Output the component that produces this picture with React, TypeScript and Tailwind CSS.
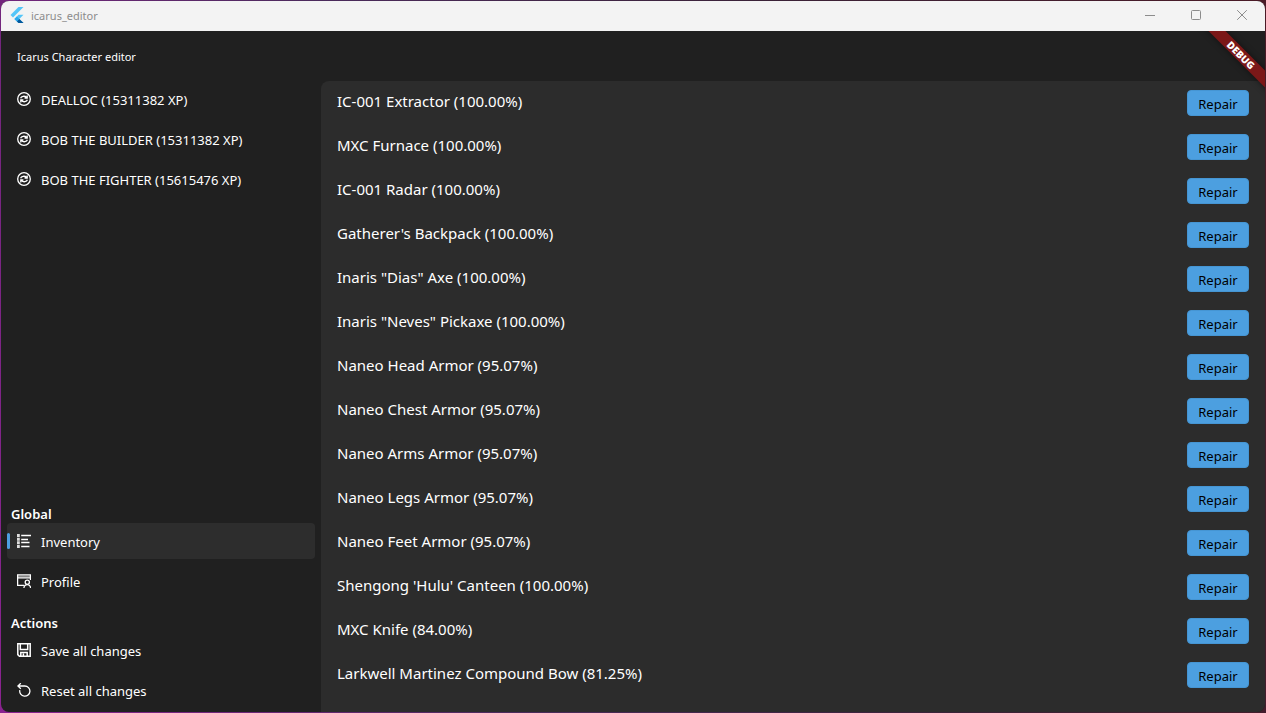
import { useState, type ReactNode } from "react";

const characters = [
  { name: "DEALLOC", xp: 15311382 },
  { name: "BOB THE BUILDER", xp: 15311382 },
  { name: "BOB THE FIGHTER", xp: 15615476 },
];

const initialItems = [
  { name: "IC-001 Extractor", durability: 100 },
  { name: "MXC Furnace", durability: 100 },
  { name: "IC-001 Radar", durability: 100 },
  { name: "Gatherer's Backpack", durability: 100 },
  { name: 'Inaris "Dias" Axe', durability: 100 },
  { name: 'Inaris "Neves" Pickaxe', durability: 100 },
  { name: "Naneo Head Armor", durability: 95.07 },
  { name: "Naneo Chest Armor", durability: 95.07 },
  { name: "Naneo Arms Armor", durability: 95.07 },
  { name: "Naneo Legs Armor", durability: 95.07 },
  { name: "Naneo Feet Armor", durability: 95.07 },
  { name: "Shengong 'Hulu' Canteen", durability: 100 },
  { name: "MXC Knife", durability: 84 },
  { name: "Larkwell Martinez Compound Bow", durability: 81.25 },
];

function FlutterLogo() {
  return (
    <svg viewBox="0 0 14 17" className="mb-px h-[17px] w-3.5" aria-hidden="true">
      <path d="M8.5 0H13.5L3 10.5L0.5 8Z" fill="#54c5f8" />
      <path d="M8.5 7.7H13.5L9.3 11.9L13.5 16.1H8.5L4.4 11.9Z" fill="#54c5f8" />
      <path d="M4.4 11.9L6.9 9.4L9.4 11.9L6.9 14.4Z" fill="#29a9ee" />
      <path d="M6.9 14.4L9.4 11.9L13.5 16.1H8.5Z" fill="#01579b" />
    </svg>
  );
}

function Icon({ children }: { children: ReactNode }) {
  return (
    <svg
      viewBox="0 0 14 14"
      className="size-3.5 shrink-0"
      fill="none"
      stroke="currentColor"
      strokeWidth="1.3"
      aria-hidden="true"
    >
      {children}
    </svg>
  );
}

function SyncIcon() {
  return (
    <Icon>
      <circle cx="7" cy="7" r="6.3" />
      <path d="M3.6 6.3C4.3 4.2 7.6 3.4 9.5 5.4M10.2 3.4V6H7.6M10.4 7.7C9.7 9.8 6.4 10.6 4.5 8.6M3.8 10.6V8H6.4" />
    </Icon>
  );
}

function ListIcon() {
  return (
    <Icon>
      <path d="M4.2 1.5H14M4.2 5.5H11M4.2 8.5H12.5M4.2 12.5H12.5" />
      <path d="M1.4 0V14" strokeWidth="2.8" strokeDasharray="3 0.67" opacity="0.85" />
    </Icon>
  );
}

function ProfileIcon() {
  return (
    <Icon>
      <path d="M7 11.4H0.6V0.9H13.4V6M0.6 3.9H13.4" />
      <path d="M1 2.4H13" strokeWidth="1.6" opacity="0.45" />
      <circle cx="10.3" cy="8.3" r="2.1" />
      <path d="M6.9 14C7.1 11.6 8.4 10.6 10.3 10.6S13.4 11.6 13.6 14" />
    </Icon>
  );
}

function SaveIcon() {
  return (
    <Icon>
      <path
        d="M0.8 0.8H13.2V13.2H2.4L0.8 11.6ZM3.3 1V6.5H10.7V1M3.8 13V9.5H10.2V13M6.4 10.6V13"
        strokeWidth="1.5"
      />
    </Icon>
  );
}

function ResetIcon() {
  return (
    <Icon>
      <path d="M3.8 0.2L0.9 3L3.8 5.8M0.9 3H7.8A5.1 5.1 0 1 1 2.8 7.2" />
    </Icon>
  );
}

function NavItem({
  icon,
  label,
  selected = false,
  onClick,
}: {
  icon: ReactNode;
  label: string;
  selected?: boolean;
  onClick?: () => void;
}) {
  return (
    <button
      type="button"
      onClick={onClick}
      aria-current={selected ? "page" : undefined}
      className={
        selected
          ? "relative flex h-9 w-full items-center gap-2.5 rounded bg-[#2d2d2d] px-2.5 text-left text-[13px]"
          : "relative flex h-9 w-full items-center gap-2.5 rounded px-2.5 text-left text-[13px] hover:bg-[#292929]"
      }
    >
      {selected && <span className="absolute top-2.5 left-0 h-4 w-[3px] rounded-sm bg-[#4c9fe0]" />}
      {icon}
      <span className="pt-1">{label}</span>
    </button>
  );
}

export default function App() {
  const [page, setPage] = useState("Inventory");
  const [items, setItems] = useState(initialItems);

  const repair = (index: number) =>
    setItems(items.map((item, i) => (i === index ? { ...item, durability: 100 } : item)));

  return (
    <div className="flex min-h-screen flex-col bg-[linear-gradient(75deg,#8a2390,#4b2b5c_35%,#3a2238_65%,#4a1a26)] p-px font-['Noto_Sans',sans-serif] text-white">
      <div className="flex grow flex-col overflow-hidden rounded-lg bg-[#202020]">
        <header className="flex h-[30px] shrink-0 items-center bg-[#f3f3f3] pl-[9px] text-[#8c8c8c]">
          <FlutterLogo />
          <span className="grow pl-[7px] text-[11px]">icarus_editor</span>
          <button type="button" aria-label="Minimize" className="flex h-full w-[46px] items-center justify-center pb-0.5">
            <svg viewBox="0 0 10 10" className="size-2.5" fill="none" stroke="currentColor">
              <path d="M0 5.5H10" />
            </svg>
          </button>
          <button type="button" aria-label="Maximize" className="flex h-full w-[46px] items-center justify-center pb-0.5">
            <svg viewBox="0 0 10 10" className="size-2.5" fill="none" stroke="currentColor">
              <rect x="0.5" y="0.5" width="9" height="9" rx="1" />
            </svg>
          </button>
          <button type="button" aria-label="Close" className="flex h-full w-[46px] items-center justify-center pb-0.5">
            <svg viewBox="0 0 10 10" className="size-2.5" fill="none" stroke="currentColor">
              <path d="M0.2 0.2L9.8 9.8M9.8 0.2L0.2 9.8" />
            </svg>
          </button>
        </header>

        <div className="relative flex grow flex-col">
          <h1 className="flex h-[50px] shrink-0 items-center px-4 pt-[3px] text-[11px]">Icarus Character editor</h1>

          <div className="flex grow">
            <nav className="flex w-80 shrink-0 flex-col justify-between px-1.5 pb-1">
              <div className="flex flex-col gap-1">
                {characters.map(({ name, xp }) => {
                  const label = `${name} (${xp} XP)`;
                  return (
                    <NavItem
                      key={name}
                      icon={<SyncIcon />}
                      label={label}
                      selected={page === label}
                      onClick={() => setPage(label)}
                    />
                  );
                })}
              </div>
              <div>
                <h2 className="px-1 text-[13px] leading-[18px] font-semibold">Global</h2>
                <div className="flex flex-col gap-1">
                  <NavItem
                    icon={<ListIcon />}
                    label="Inventory"
                    selected={page === "Inventory"}
                    onClick={() => setPage("Inventory")}
                  />
                  <NavItem
                    icon={<ProfileIcon />}
                    label="Profile"
                    selected={page === "Profile"}
                    onClick={() => setPage("Profile")}
                  />
                </div>
                <h2 className="mt-[15px] px-1 text-[13px] leading-[18px] font-semibold">Actions</h2>
                <div className="flex flex-col gap-1">
                  <NavItem icon={<SaveIcon />} label="Save all changes" />
                  <NavItem icon={<ResetIcon />} label="Reset all changes" onClick={() => setItems(initialItems)} />
                </div>
              </div>
            </nav>

            <main className="grow rounded-tl-lg bg-[#2c2c2c] pt-[9px] pr-4 pl-4">
              <ul>
                {items.map(({ name, durability }, index) => (
                  <li key={name} className="flex h-11 items-start justify-between">
                    <span className="text-[15px] leading-[22px]">
                      {`${name} (${durability.toFixed(2)}%)`}
                    </span>
                    <button
                      type="button"
                      onClick={() => repair(index)}
                      className="h-[26px] w-[62px] rounded border border-[#4595d3] bg-[#4c9fe0] pt-0.5 text-[13px] leading-[22px] text-black"
                    >
                      Repair
                    </button>
                  </li>
                ))}
              </ul>
            </main>
          </div>

          <div className="pointer-events-none absolute top-0 right-0 size-20 overflow-hidden">
            <div className="absolute top-[18px] -right-9 flex h-3 w-[120px] rotate-45 items-center justify-center bg-[#7b1818] font-['Open_Sans',sans-serif] text-[10px] leading-3 font-black shadow-[0_0_6px_rgba(0,0,0,0.5)]">
              DEBUG
            </div>
          </div>
        </div>
      </div>
    </div>
  );
}
